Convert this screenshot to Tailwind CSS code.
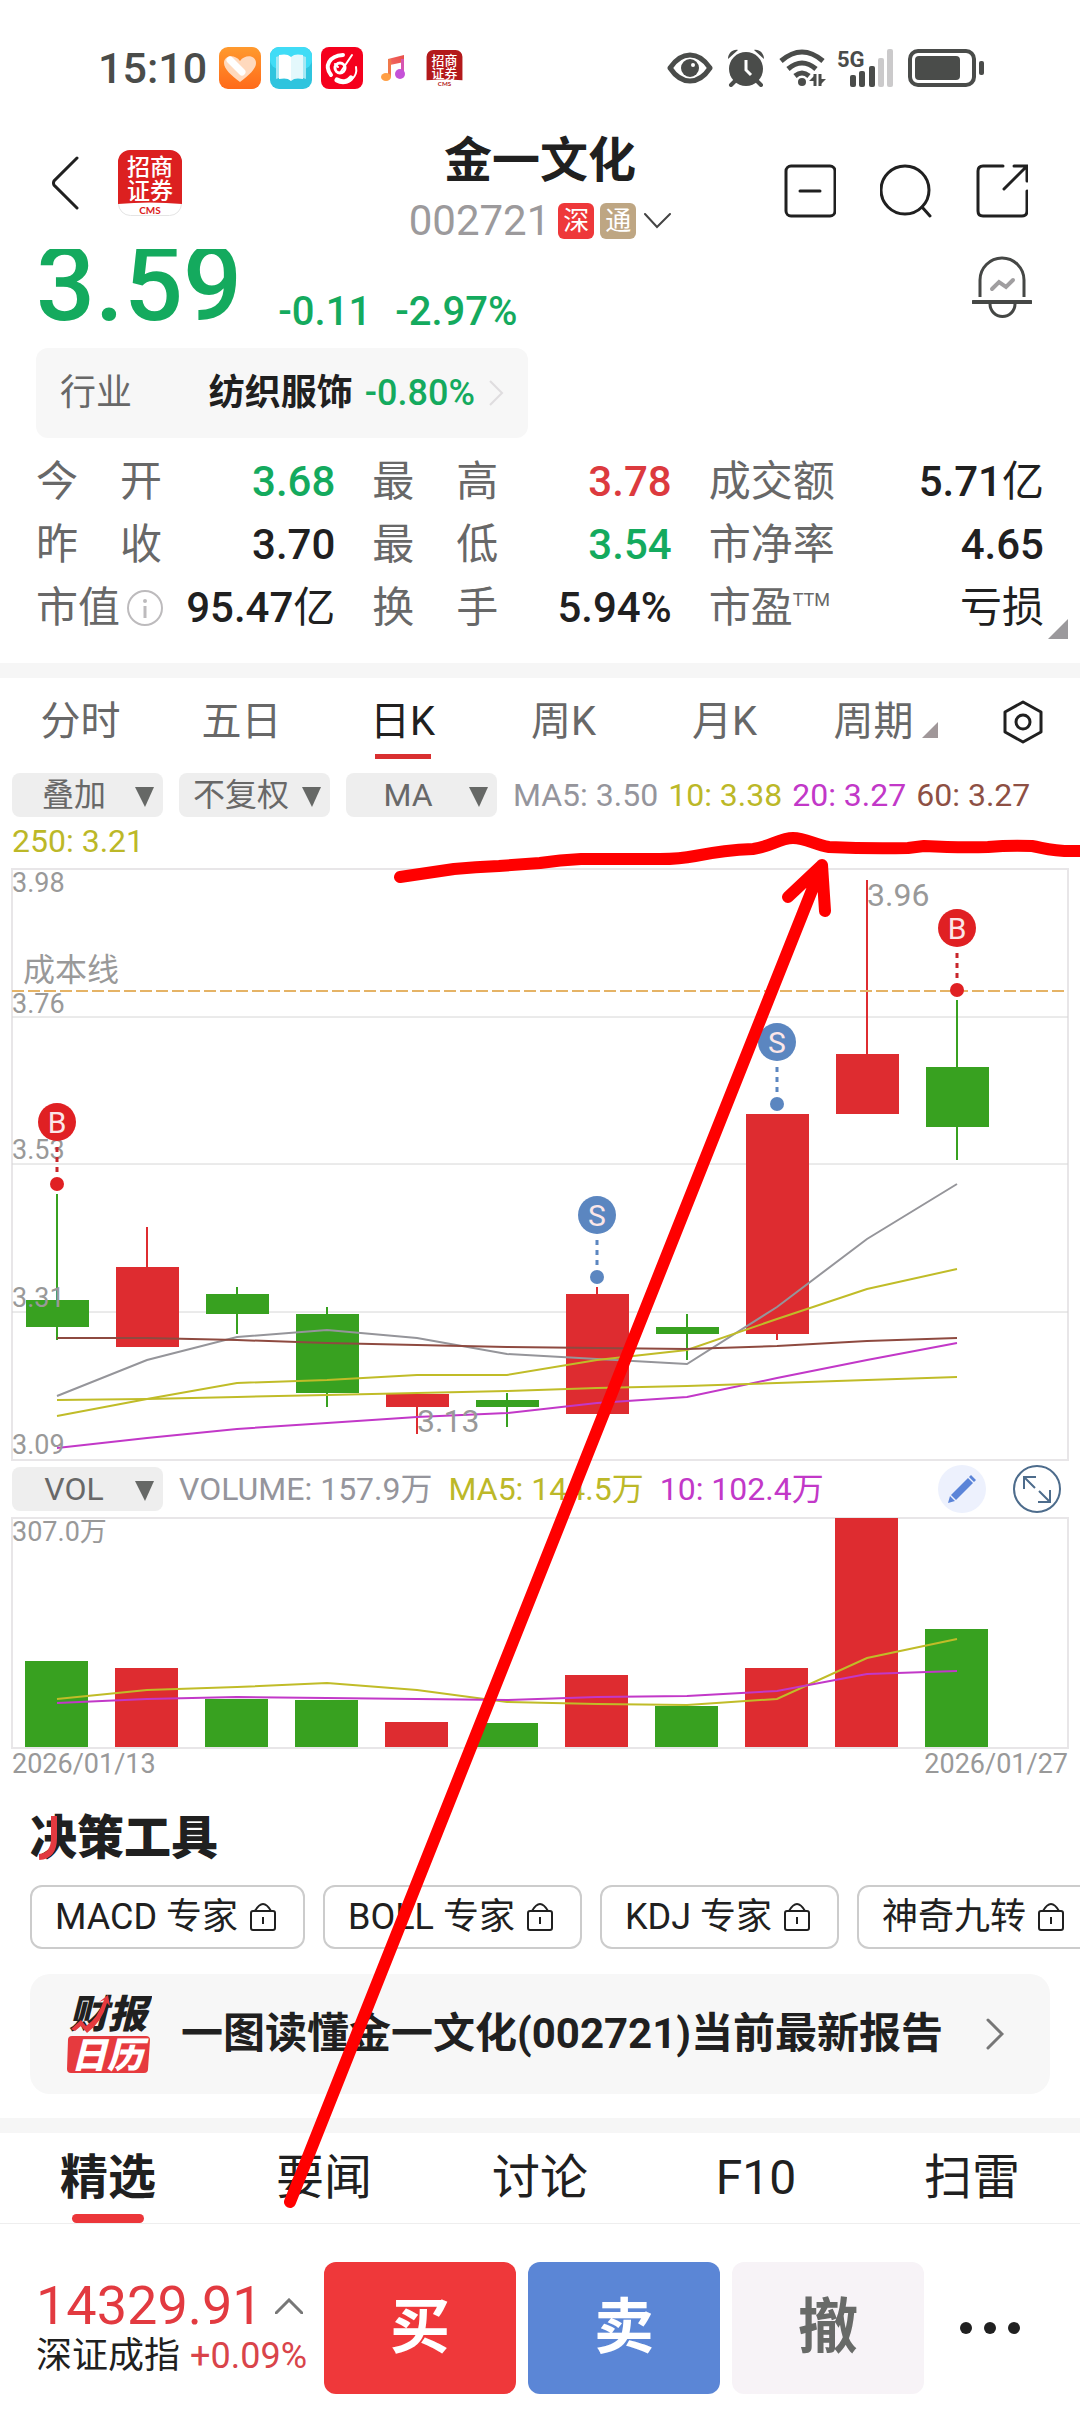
<!DOCTYPE html>
<html lang="zh-CN">
<head>
<meta charset="utf-8">
<meta name="viewport" content="width=device-width, initial-scale=1">
<title>金一文化 002721</title>
<script src="https://cdn.jsdelivr.net/npm/@tailwindcss/browser@4"></script>
</head>
<body class="relative overflow-x-hidden bg-white text-[#202020] font-['Roboto','Noto_Sans_CJK_SC',sans-serif]">

<!-- System status bar -->
<div class="flex h-23 items-center justify-between pt-11 pr-24 pl-[98px]">
  <div class="flex items-center">
    <span class="text-[43px] leading-12 font-medium text-[#4a4c4a]">15:10</span>
    <svg class="ml-3 h-[42px] w-[42px]" viewBox="0 0 42 42"><defs><linearGradient id="og" x2="0" y2="1"><stop stop-color="#ff9a2e"/><stop offset="1" stop-color="#ff6a1a"/></linearGradient></defs><rect width="42" height="42" rx="9" fill="url(#og)"/><path d="M21 35C12 28 5 22 5 16c0-8 11-9 16-2 5-7 16-6 16 2 0 6-7 12-16 19z" fill="#ffd9bd"/><path d="M11 13l12 12" stroke="#fff" stroke-width="7" stroke-linecap="round"/></svg>
    <svg class="ml-[9px] h-[42px] w-[42px]" viewBox="0 0 42 42"><rect width="42" height="42" rx="9" fill="#2fc4de"/><rect width="42" height="22" rx="9" fill="#40dcf6"/><path d="M6 10l3-1v22l-3 1zM36 10l-3-1v22l3 1z" fill="#a5e8f4"/><path d="M9 8c5-1 9-1 12 2v24c-3-3-7-3-12-2z" fill="#fff"/><path d="M33 8c-5-1-9-1-12 2v24c3-3 7-3 12-2z" fill="#e4f8fc"/></svg>
    <svg class="ml-[9px] h-[42px] w-[42px]" viewBox="0 0 42 42"><rect width="42" height="42" rx="8" fill="#f5001d"/><g fill="none" stroke="#fff" stroke-linecap="round"><path d="M22 8C8 9 3 19 10 28" stroke-width="4"/><path d="M31 8L19 26M14 17l3 3" stroke-width="2"/><circle cx="19" cy="21" r="5" stroke-width="3"/><path d="M17 34c10 5 20-4 18-14" stroke-width="2"/><path d="M16 33c5 3 11 2 14-2" stroke-width="5"/></g></svg>
    <svg class="ml-[18px] h-7 w-6" viewBox="0 0 24 28"><defs><linearGradient id="mg" x1="0" y1="1" x2="1" y2="0"><stop stop-color="#ffb347"/><stop offset=".5" stop-color="#f0605a"/><stop offset="1" stop-color="#e8504a"/></linearGradient></defs><path d="M7 5l16-4v7L9 11v12" fill="url(#mg)"/><path d="M7 5h3v18H7z" fill="#f0784a"/><ellipse cx="5" cy="23" rx="5" ry="4" fill="#ff9f45"/><path d="M20 5h3v14h-3z" fill="#d755b0"/><ellipse cx="19" cy="20" rx="5" ry="5" fill="#c552d8"/></svg>
    <svg class="ml-[21px] h-[37px] w-[37px]" viewBox="0 0 64 66"><rect width="64" height="66" rx="12" fill="#fff"/><path d="M0 54V12A12 12 0 0 1 12 0h40a12 12 0 0 1 12 12v42q-32-3-64 0z" fill="#b3191b"/><g fill="#fff" text-anchor="middle" font-family="Noto Sans CJK SC" font-weight="500"><text x="32" y="26" font-size="23">招商</text><text x="32" y="50" font-size="23">证券</text></g><text x="32" y="65" font-size="11" font-weight="700" text-anchor="middle" fill="#b3191b" font-family="Lato">CMS</text></svg>
  </div>
  <div class="flex items-center text-[#4a4c4a]">
    <svg class="h-8 w-[46px]" viewBox="0 0 46 32"><path d="M3 16C9 7 16 3 23 3s14 4 20 13C37 25 30 29 23 29S9 25 3 16z" fill="none" stroke="currentColor" stroke-width="5" stroke-linejoin="round"/><circle cx="23" cy="16" r="9" fill="currentColor"/><circle cx="26" cy="13" r="2" fill="#fff"/></svg>
    <svg class="ml-[14px] h-[38px] w-[38px]" viewBox="0 0 38 38"><g fill="currentColor"><circle cx="19" cy="20" r="17"/><path d="M1 10C1 4 6 0 11 1zM37 10C37 4 32 0 27 1z"/></g><path d="M8 32l-4 4M30 32l4 4" stroke="currentColor" stroke-width="4" stroke-linecap="round"/><path d="M19 11v10l5 5" fill="none" stroke="#fff" stroke-width="3"/></svg>
    <svg class="ml-[14px] h-[38px] w-[48px]" viewBox="0 0 48 38"><g fill="none" stroke="currentColor" stroke-width="5"><path d="M2 12q21-18 42 0M9 20q14-12 28 0M16 27q7-6 14 0"/></g><circle cx="23" cy="33" r="4" fill="currentColor"/><path d="M36 25v12M41 25v12" stroke="currentColor" stroke-width="3"/><path d="M30 32l6-6v6zM47 30l-6 6v-6z" fill="currentColor"/></svg>
    <svg class="ml-[10px] h-[38px] w-[57px]" viewBox="0 0 57 38"><text x="0" y="18" font-size="22" font-weight="700" fill="currentColor" font-family="Roboto">5G</text><g fill="currentColor"><rect x="13" y="26" width="6" height="12" rx="2"/><rect x="22" y="22" width="6" height="16" rx="2"/><rect x="32" y="17" width="6" height="21" rx="2"/></g><g fill="#cbcacb"><rect x="41" y="9" width="6" height="29" rx="2"/><rect x="50" y="0" width="6" height="38" rx="2"/></g></svg>
    <svg class="ml-[14px] h-[38px] w-[76px]" viewBox="0 0 76 38"><rect x="2" y="2" width="64" height="34" rx="8" fill="none" stroke="currentColor" stroke-width="4"/><rect x="7" y="7" width="45" height="24" rx="4" fill="currentColor"/><rect x="71" y="12" width="5" height="14" rx="2" fill="currentColor"/></svg>
  </div>
</div>

<!-- Stock header -->
<header class="grid grid-cols-[1fr_auto_1fr] items-center px-13 pt-[41px]">
  <div class="flex items-center gap-[39px] pb-4">
    <button aria-label="返回"><svg class="h-[54px] w-[27px]" viewBox="0 0 27 54"><path d="M25 2L2 25q-1 2 0 4L25 52" fill="none" stroke="#202020" stroke-width="3" stroke-linecap="round"/></svg></button>
    <svg class="h-[66px] w-16" viewBox="0 0 64 66"><rect x=".5" y=".5" width="63" height="65" rx="12" fill="#fff" stroke="#e4e4e4"/><path d="M0 54V12A12 12 0 0 1 12 0h40a12 12 0 0 1 12 12v42q-32-3-64 0z" fill="#dc2020"/><g fill="#fff" text-anchor="middle" font-family="Noto Sans CJK SC" font-weight="500"><text x="32" y="25" font-size="23">招商</text><text x="32" y="49" font-size="23">证券</text></g><text x="32" y="64" font-size="10" font-weight="700" text-anchor="middle" fill="#dc2020" font-family="Lato">CMS</text></svg>
  </div>
  <div class="flex flex-col items-center">
    <h1 class="text-[48px] leading-14 font-bold">金一文化</h1>
    <div class="mt-[10px] mb-[6px] flex h-11 items-center">
      <span class="text-[42px] leading-11 text-[#9c9a9c]">002721</span>
      <span class="ml-2 h-9 w-9 rounded-md bg-[#ee383a] text-center text-[26px] leading-9 text-white">深</span>
      <span class="ml-[6px] h-9 w-9 rounded-md bg-[#bea683] text-center text-[26px] leading-9 text-white">通</span>
      <svg class="ml-2 h-4 w-[27px]" viewBox="0 0 27 16"><path d="M1 1l12 13L26 1" fill="none" stroke="#444" stroke-width="2" stroke-linecap="round"/></svg>
    </div>
  </div>
  <div class="flex items-center justify-end gap-11">
    <button aria-label="移除自选"><svg class="h-[54px] w-[52px]" viewBox="0 0 52 54" fill="none" stroke="#202020" stroke-width="3" stroke-linecap="round"><rect x="2" y="2" width="49" height="50" rx="5"/><path d="M16 27h20"/></svg></button>
    <button aria-label="搜索"><svg class="h-[54px] w-[52px]" viewBox="0 0 52 54" fill="none" stroke="#202020" stroke-width="3" stroke-linecap="round"><circle cx="25" cy="26" r="24"/><path d="M42 43l8 9"/></svg></button>
    <button aria-label="分享"><svg class="h-[54px] w-[52px]" viewBox="0 0 52 54" fill="none" stroke="#202020" stroke-width="3" stroke-linecap="round"><path d="M27 2H7Q2 2 2 7v40q0 5 5 5h39q5 0 5-5V27M38 2h13v15M50 3L28 25"/></svg></button>
  </div>
</header>

<!-- Quote summary -->
<section class="px-9 pb-6">
  <div class="flex h-[99px] items-start overflow-hidden pr-3 text-[#14aa5e]">
    <span class="text-[104px] leading-[72px] font-medium">3.59</span>
    <span class="mt-[38px] ml-9 text-[40px] leading-[50px] font-medium">-0.11</span>
    <span class="mt-[38px] ml-6 text-[40px] leading-[50px] font-medium">-2.97%</span>
    <button class="mt-[7px] ml-auto" aria-label="预警"><svg class="h-[62px] w-15" viewBox="0 0 60 62" fill="none" stroke="#454745" stroke-width="3"><path d="M8 41V24a22 22 0 0 1 44 0v17"/><path d="M1 46h58" stroke-linecap="round" stroke-width="4"/><path d="M18 48a12 12 0 0 0 25 0"/><path d="M20 33l7-7 7 5 7-7" stroke="#a09ea0" stroke-width="4" stroke-linecap="round"/></svg></button>
  </div>
  <a href="#" class="flex h-[90px] w-[492px] items-center rounded-xl bg-[#f7f7f7] px-6 text-[36px] leading-12">
    <span class="text-[#686868]">行业</span>
    <span class="ml-auto font-bold">纺织服饰</span>
    <span class="ml-3 font-medium text-[#14aa5e]">-0.80%</span>
    <svg class="ml-[13px] h-[26px] w-4" viewBox="0 0 16 26"><path d="M2 1l12 12L2 25" fill="none" stroke="#dfdddf" stroke-width="2"/></svg>
  </a>
  <dl class="relative mt-3 grid grid-cols-[299fr_299fr_335fr] gap-x-[37px] text-[42px] leading-[63px]">
    <div class="flex justify-between"><dt class="flex w-[126px] justify-between text-[#686868]"><span>今</span><span>开</span></dt><dd class="font-medium text-[#14aa5e]">3.68</dd></div>
    <div class="flex justify-between"><dt class="flex w-[126px] justify-between text-[#686868]"><span>最</span><span>高</span></dt><dd class="font-medium text-[#dc3a3e]">3.78</dd></div>
    <div class="flex justify-between"><dt class="text-[#686868]">成交额</dt><dd class="font-medium">5.71<span class="font-normal">亿</span></dd></div>
    <div class="flex justify-between"><dt class="flex w-[126px] justify-between text-[#686868]"><span>昨</span><span>收</span></dt><dd class="font-medium">3.70</dd></div>
    <div class="flex justify-between"><dt class="flex w-[126px] justify-between text-[#686868]"><span>最</span><span>低</span></dt><dd class="font-medium text-[#14aa5e]">3.54</dd></div>
    <div class="flex justify-between"><dt class="text-[#686868]">市净率</dt><dd class="font-medium">4.65</dd></div>
    <div class="flex justify-between"><dt class="flex items-center text-[#686868]">市值<svg class="ml-[7px] h-9 w-9" viewBox="0 0 36 36" fill="none" stroke="#bdbbbd" stroke-width="2"><circle cx="18" cy="18" r="17"/><path d="M18 16v12" stroke-width="3"/><circle cx="18" cy="11" r="1"/></svg></dt><dd class="font-medium">95.47<span class="font-normal">亿</span></dd></div>
    <div class="flex justify-between"><dt class="flex w-[126px] justify-between text-[#686868]"><span>换</span><span>手</span></dt><dd class="font-medium">5.94%</dd></div>
    <div class="flex justify-between"><dt class="flex text-[#686868]">市盈<span class="text-[18px] leading-[48px]">TTM</span></dt><dd>亏损</dd></div>
    <svg class="absolute -right-6 bottom-0 h-5 w-5" viewBox="0 0 20 20"><path d="M20 0v20H0z" fill="#9b999c"/></svg>
  </dl>
</section>

<div class="h-[15px] bg-[#f6f6f6]"></div>

<!-- Chart period tabs -->
<nav class="flex py-[14px] text-[40px] leading-15 text-[#686868]">
  <button class="flex h-[67px] flex-1 flex-col items-center">分时</button>
  <button class="flex h-[67px] flex-1 flex-col items-center">五日</button>
  <button class="flex h-[67px] flex-1 flex-col items-center text-[#202020]">日K<span class="mt-[2px] h-[5px] w-14 bg-[#d92f30]"></span></button>
  <button class="flex h-[67px] flex-1 flex-col items-center">周K</button>
  <button class="flex h-[67px] flex-1 flex-col items-center">月K</button>
  <button class="flex h-[67px] flex-1 justify-center">周期<svg class="mt-[30px] ml-2 h-4 w-4" viewBox="0 0 16 16"><path d="M16 0v16H0z" fill="#a09799"/></svg></button>
  <button class="flex h-15 w-[114px] shrink-0 items-center justify-center" aria-label="设置"><svg class="h-11 w-10" viewBox="0 0 40 44" fill="none" stroke="#202020" stroke-width="3" stroke-linejoin="round"><path d="M20 2l18 10v20L20 42 2 32V12z"/><circle cx="20" cy="22" r="7"/></svg></button>
</nav>

<!-- Chart overlays and moving averages -->
<div class="flex flex-wrap items-center gap-x-[10px] gap-y-1 px-3 pb-[7px] text-[32px] leading-10">
  <label class="relative mr-[6px] block h-11 w-[151px]"><select aria-label="叠加" class="h-11 w-full appearance-none rounded-lg bg-[#eee] pr-[27px] text-center text-[#686868]"><option>叠加</option></select><svg class="pointer-events-none absolute top-[14px] right-[9px] h-5 w-[19px]" viewBox="0 0 19 20"><path d="M0 0h19L10 20z" fill="#666866"/></svg></label>
  <label class="relative mr-[6px] block h-11 w-[151px]"><select aria-label="复权" class="h-11 w-full appearance-none rounded-lg bg-[#eee] pr-[27px] text-center text-[#686868]"><option>不复权</option></select><svg class="pointer-events-none absolute top-[14px] right-[9px] h-5 w-[19px]" viewBox="0 0 19 20"><path d="M0 0h19L10 20z" fill="#666866"/></svg></label>
  <label class="relative mr-[6px] block h-11 w-[151px]"><select aria-label="主图指标" class="h-11 w-full appearance-none rounded-lg bg-[#eee] pr-[27px] text-center text-[#686868]"><option>MA</option></select><svg class="pointer-events-none absolute top-[14px] right-[9px] h-5 w-[19px]" viewBox="0 0 19 20"><path d="M0 0h19L10 20z" fill="#666866"/></svg></label>
  <span class="text-[#95959c]">MA5: 3.50</span>
  <span class="text-[#bcb828]">10: 3.38</span>
  <span class="text-[#c238c8]">20: 3.27</span>
  <span class="text-[#8e5044]">60: 3.27</span>
  <span class="text-[#bcb828]">250: 3.21</span>
</div>

<!-- Daily candlestick chart -->
<svg class="block h-auto w-full" viewBox="0 868 1080 594" font-family="Roboto, 'Noto Sans CJK SC', sans-serif">
  <rect x="12" y="869" width="1056" height="591" fill="none" stroke="#e8e6e8" stroke-width="2"/>
  <path d="M12 1017h1056M12 1164h1056M12 1312h1056" stroke="#d6d6d6" stroke-width="1"/>
  <g fill="#38a120">
    <path d="M26 1300h63v27H26zM206 1294h63v20h-63zM296 1314h63v79h-63zM476 1400h63v7h-63zM656 1327h63v7h-63zM926 1067h63v60h-63z"/>
    <path d="M56 1194h2v146h-2zM236 1287h2v47h-2zM326 1307h2v100h-2zM506 1393h2v34h-2zM686 1314h2v46h-2zM956 1000h2v160h-2z"/>
  </g>
  <g fill="#de2c30">
    <path d="M116 1267h63v80h-63zM386 1394h63v13h-63zM566 1294h63v120h-63zM746 1114h63v220h-63zM836 1054h63v60h-63z"/>
    <path d="M146 1227h2v41h-2zM416 1406h2v28h-2zM596 1287h2v8h-2zM776 1333h2v7h-2zM866 880h2v175h-2z"/>
  </g>
  <g fill="none" stroke-width="2">
    <path stroke="#95959a" d="M57 1396L147 1360L237 1337L327 1330L417 1338L507 1354L597 1359L687 1364L777 1307L867 1239L957 1184"/>
    <path stroke="#c0bc28" d="M57 1416L147 1399L237 1383L327 1380L417 1375L507 1375L597 1360L687 1350L777 1319L867 1289L957 1269"/>
    <path stroke="#c238c8" d="M57 1448L147 1438L237 1429L327 1423L417 1417L507 1413L597 1403L687 1397L777 1378L867 1360L957 1343"/>
    <path stroke="#8e4a40" d="M57 1338L147 1338L237 1340L327 1343L417 1345L507 1347L597 1348L687 1349L777 1346L867 1341L957 1338"/>
    <path stroke="#c0bc28" d="M57 1400L147 1399L237 1397L327 1395L417 1393L507 1391L597 1388L687 1386L777 1383L867 1380L957 1377"/>
    <path stroke="#e5b366" stroke-dasharray="12 4" d="M12 991h1052"/>
  </g>
  <g fill="#999" font-size="27">
    <text x="12" y="892">3.98</text><text x="12" y="1013">3.76</text><text x="12" y="1159">3.53</text><text x="12" y="1307">3.31</text><text x="12" y="1454">3.09</text>
  </g>
  <g fill="#999" font-size="32">
    <text x="23" y="981">成本线</text><text x="417" y="1432">3.13</text><text x="867" y="906">3.96</text>
  </g>
  <g fill="#e02023">
    <circle cx="57" cy="1122" r="19"/><circle cx="57" cy="1184" r="7"/><path d="M57 1147v25" stroke="#c8252a" stroke-width="3" stroke-dasharray="5"/>
    <circle cx="957" cy="928" r="19"/><circle cx="957" cy="990" r="7"/><path d="M957 953v25" stroke="#c8252a" stroke-width="3" stroke-dasharray="5"/>
  </g>
  <g fill="#5b86c0">
    <circle cx="597" cy="1215" r="19"/><circle cx="597" cy="1277" r="7"/><path d="M597 1240v25" stroke="#5b86c0" stroke-width="3" stroke-dasharray="5"/>
    <circle cx="777" cy="1042" r="19"/><circle cx="777" cy="1104" r="7"/><path d="M777 1067v25" stroke="#5b86c0" stroke-width="3" stroke-dasharray="5"/>
  </g>
  <g fill="#fbe6e8" font-size="30" text-anchor="middle">
    <text x="57" y="1133">B</text><text x="957" y="939">B</text><text x="597" y="1226">S</text><text x="777" y="1053">S</text>
  </g>
</svg>

<!-- Volume indicator row -->
<div class="flex items-center py-[5px] pr-[19px] pl-3 text-[32px] leading-11">
  <label class="relative block h-11 w-[151px]"><select aria-label="副图指标" class="h-11 w-full appearance-none rounded-lg bg-[#eee] pr-[27px] text-center text-[#686868]"><option>VOL</option></select><svg class="pointer-events-none absolute top-[14px] right-[9px] h-5 w-[19px]" viewBox="0 0 19 20"><path d="M0 0h19L10 20z" fill="#666866"/></svg></label>
  <span class="ml-4 text-[#95959c]">VOLUME: 157.9万</span>
  <span class="ml-4 text-[#bcb828]">MA5: 144.5万</span>
  <span class="ml-4 text-[#c238c8]">10: 102.4万</span>
  <button class="-my-1 ml-auto" aria-label="画线"><svg class="h-12 w-12" viewBox="0 0 48 48"><circle cx="24" cy="24" r="24" fill="#edf1fd"/><g fill="#5b84d8"><path d="M30 13l5 5-17 17-5-5z"/><path d="M12 31l5 5-7 2zM31 12l2-2 5 5-2 2z"/></g></svg></button>
  <button class="-my-1 ml-[27px]" aria-label="全屏"><svg class="h-12 w-12" viewBox="0 0 48 48" fill="none" stroke="#4d6c8c" stroke-width="2"><circle cx="24" cy="24" r="23"/><path d="M22 23L11 12M11 24V12h12M26 26l11 11M37 25v12H25"/></svg></button>
</div>

<!-- Volume chart -->
<svg class="block h-auto w-full" viewBox="0 1516 1080 234" font-family="Roboto, 'Noto Sans CJK SC', sans-serif">
  <rect x="12" y="1518" width="1056" height="230" fill="none" stroke="#e8e6e8" stroke-width="2"/>
  <path fill="#38a120" d="M25 1661h63v86H25zM205 1699h63v48h-63zM295 1700h63v47h-63zM475 1723h63v24h-63zM655 1706h63v41h-63zM925 1629h63v118h-63z"/>
  <path fill="#de2c30" d="M115 1668h63v79h-63zM385 1722h63v25h-63zM565 1675h63v72h-63zM745 1668h63v79h-63zM835 1518h63v229h-63z"/>
  <g fill="none" stroke-width="2">
    <path stroke="#c0bc28" d="M57 1699L147 1690L237 1687L327 1683L417 1690L507 1702L597 1704L687 1705L777 1699L867 1658L957 1639"/>
    <path stroke="#c238c8" d="M57 1703L147 1699L237 1697L327 1698L417 1699L507 1700L597 1697L687 1696L777 1691L867 1674L957 1671"/>
  </g>
  <text x="12" y="1541" fill="#999" font-size="27">307.0万</text>
</svg>
<div class="flex justify-between px-3 text-[27px] leading-7 text-[#999]"><span>2026/01/13</span><span>2026/01/27</span></div>

<!-- Decision tools -->
<section class="pb-6 pl-[30px]">
  <h2 class="relative mt-8 text-[47px] leading-14 font-black">决策工具
    <svg class="absolute top-[6px] left-[9px] h-[44px] w-[19px]" viewBox="0 0 19 44"><path d="M15 0v22q0 18-15 19" fill="none" stroke="#e23a40" stroke-width="6"/></svg>
  </h2>
  <div class="mt-[19px] flex gap-[18px] overflow-hidden text-[36px] leading-12 whitespace-nowrap">
    <button class="flex h-16 shrink-0 items-center gap-3 rounded-xl border-2 border-[#ccc] pr-[27px] pl-[23px]">MACD 专家<svg class="h-7 w-[26px]" viewBox="0 0 26 28" fill="none" stroke="#202020" stroke-width="2"><rect x="1" y="8" width="24" height="19" rx="2"/><path d="M5 8q8-14 16 0M13 14v7"/></svg></button>
    <button class="flex h-16 shrink-0 items-center gap-3 rounded-xl border-2 border-[#ccc] pr-[27px] pl-[23px]">BOLL 专家<svg class="h-7 w-[26px]" viewBox="0 0 26 28" fill="none" stroke="#202020" stroke-width="2"><rect x="1" y="8" width="24" height="19" rx="2"/><path d="M5 8q8-14 16 0M13 14v7"/></svg></button>
    <button class="flex h-16 shrink-0 items-center gap-3 rounded-xl border-2 border-[#ccc] pr-[27px] pl-[23px]">KDJ 专家<svg class="h-7 w-[26px]" viewBox="0 0 26 28" fill="none" stroke="#202020" stroke-width="2"><rect x="1" y="8" width="24" height="19" rx="2"/><path d="M5 8q8-14 16 0M13 14v7"/></svg></button>
    <button class="flex h-16 shrink-0 items-center gap-3 rounded-xl border-2 border-[#ccc] pr-[27px] pl-[23px]">神奇九转<svg class="h-7 w-[26px]" viewBox="0 0 26 28" fill="none" stroke="#202020" stroke-width="2"><rect x="1" y="8" width="24" height="19" rx="2"/><path d="M5 8q8-14 16 0M13 14v7"/></svg></button>
  </div>
  <a href="#" class="mt-[25px] mr-[30px] flex h-[120px] items-center rounded-[20px] bg-[#f7f7f7] pr-[46px] pl-9">
    <svg class="h-20 w-[86px]" viewBox="0 0 86 80" font-family="Noto Sans CJK SC" font-weight="900" font-style="italic"><text x="3" y="34" font-size="39" fill="#202020">财报</text><path d="M5 35l10-9 5 6Q32 24 38 6l-5 2 9-7 2 11-3-3Q36 28 21 39l-6-7-6 5z" fill="#e63a3e"/><path d="M6 42h74q4 0 4 4l-2 29q0 4-4 4H5q-4 0-4-4l1-29q0-4 4-4z" fill="#e63a3e"/><text x="5" y="74" font-size="36" fill="#fff">日历</text></svg>
    <span class="ml-[29px] text-[42px] leading-15 font-bold whitespace-nowrap">一图读懂金一文化(002721)当前最新报告</span>
    <svg class="ml-auto h-8 w-[18px]" viewBox="0 0 18 32"><path d="M2 2l14 14L2 30" fill="none" stroke="#777" stroke-width="3" stroke-linecap="round"/></svg>
  </a>
</section>

<div class="h-[15px] bg-[#f6f6f6]"></div>

<!-- Content tabs -->
<nav class="grid grid-cols-5 border-b border-[#eee] pt-[13px] text-[48px] leading-16">
  <button class="flex h-[77px] flex-col items-center font-bold">精选<span class="mt-1 h-[9px] w-18 rounded-full bg-[#ec363a]"></span></button>
  <button class="flex h-[77px] flex-col items-center">要闻</button>
  <button class="flex h-[77px] flex-col items-center">讨论</button>
  <button class="flex h-[77px] flex-col items-center">F10</button>
  <button class="flex h-[77px] flex-col items-center">扫雷</button>
</nav>

<!-- Trade bar -->
<footer class="flex items-center gap-3 pt-[38px] pb-[18px] pl-9">
  <div class="w-[276px] shrink-0">
    <div class="flex items-center text-[54px] leading-14 text-[#e23a40]">14329.91<svg class="ml-3 h-4 w-7" viewBox="0 0 28 16"><path d="M1 15L14 2l13 13" fill="none" stroke="#777" stroke-width="3" stroke-linecap="round"/></svg></div>
    <div class="flex justify-between pr-[5px] text-[36px] leading-11 whitespace-nowrap"><span>深证成指</span><span class="text-[#d9444a]">+0.09%</span></div>
  </div>
  <button class="h-[132px] flex-1 rounded-xl bg-[#ef383a] text-[60px] font-bold text-white">买</button>
  <button class="h-[132px] flex-1 rounded-xl bg-[#5b86d6] text-[60px] font-bold text-white">卖</button>
  <button class="h-[132px] flex-1 rounded-xl bg-[#f7f3f7] text-[60px] font-bold text-[#686a68]">撤</button>
  <button class="mr-9 flex w-[108px] justify-center" aria-label="更多"><svg class="h-3 w-15" viewBox="0 0 60 12" fill="#202020"><circle cx="6" cy="6" r="6"/><circle cx="30" cy="6" r="6"/><circle cx="54" cy="6" r="6"/></svg></button>
</footer>

<!-- Hand-drawn markup over the page -->
<svg class="pointer-events-none absolute inset-x-0 top-0 h-auto w-full" viewBox="0 0 1080 2412" fill="none" stroke="#f00" stroke-width="12" stroke-linecap="round" stroke-linejoin="round">
  <path d="M400 877L454 869Q475 867 499 866L540 863Q560 860 581 859H660Q680 859 695 856Q725 850 753 849C770 847 780 838 793 838S815 845 829 847Q870 849 908 848L924 846Q960 848 988 847Q1010 845 1032 846C1045 848 1050 852 1080 851"/>
  <path d="M290 2202L822 865M788 897L822 865L825 911"/>
</svg>
</body>
</html>
